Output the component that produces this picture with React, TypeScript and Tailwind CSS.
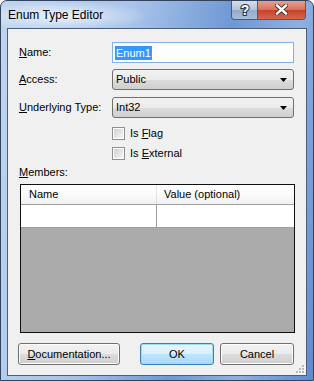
import React from 'react';

function Combo({ value }: { value: string }) {
  return (
    <div className="ml-auto flex h-[21px] w-[182px] items-center rounded-[3px] border border-[#707070] bg-[linear-gradient(#f2f2f2_0%,#ebebeb_50%,#dddddd_51%,#cfcfcf_100%)] pl-[3px] pr-[6px]">
      <span className="flex-1">{value}</span>
      <svg width="7" height="4" viewBox="0 0 7 4">
        <path d="M0 0h7L3.5 4z" fill="#000" />
      </svg>
    </div>
  );
}

function Check({ children }: { children: React.ReactNode }) {
  return (
    <div className="flex h-[13px] items-center pl-[93px]">
      <div className="flex h-[13px] w-[13px] items-center justify-center border border-[#8e8f8f] bg-white">
        <div className="h-[9px] w-[9px] bg-[linear-gradient(135deg,#cbcfd5,#f6f6f6)]" />
      </div>
      <span className="ml-[5px]">{children}</span>
    </div>
  );
}

function Btn({ children, w, focus }: { children: React.ReactNode; w: string; focus?: boolean }) {
  const base = 'flex h-[22px] items-center justify-center rounded-[3px] border ';
  const look = focus
    ? 'border-[#3c7fb1] bg-[linear-gradient(#eaf6fd_0%,#d9f0fc_50%,#bee6fd_51%,#a7d9f5_100%)] shadow-[inset_0_0_0_1px_#9fdcf8]'
    : 'border-[#707070] bg-[linear-gradient(#f2f2f2_0%,#ebebeb_50%,#dddddd_51%,#cfcfcf_100%)] shadow-[inset_0_0_0_1px_#fcfcfc]';
  return <div className={base + look + ' ' + w}>{children}</div>;
}

export default function App() {
  return (
    <div className="relative h-[381px] w-[314px] overflow-hidden rounded-t-[7px] border border-[#33435c] bg-[linear-gradient(100deg,#bfd5f0_0%,#a9c4ea_35%,#6f98d4_62%,#8db0e0_80%,#5f8bd0_100%)] font-['Liberation_Sans',Arial,sans-serif] text-[11px] text-black">
      {/* glass glow behind title */}
      <div className="pointer-events-none absolute left-0 top-0 h-[30px] w-[150px] bg-[radial-gradient(ellipse_at_40%_50%,rgba(255,255,255,0.75),rgba(255,255,255,0)_70%)]" />

      {/* title bar */}
      <div className="relative flex h-[27px] items-center pl-[7px] text-[12px]">Enum Type Editor</div>

      {/* caption buttons */}
      <div className="absolute right-[7px] top-[-1px] flex h-[20px] overflow-hidden rounded-b-[4px] border border-t-0 border-[#4a5a78]">
        <div className="flex w-[26px] items-center justify-center border-r border-[#4a5a78] bg-[linear-gradient(#d8e2ef_0%,#b5c6dd_50%,#93a9c8_51%,#a9bdd8_100%)]">
          <svg width="12" height="16" viewBox="0 0 12 16">
            <text
              x="6"
              y="13"
              textAnchor="middle"
              fontFamily="Liberation Sans, Arial, sans-serif"
              fontWeight="bold"
              fontSize="14"
              fill="#fff"
              stroke="#2a3650"
              strokeWidth="2.2"
              paintOrder="stroke"
            >
              ?
            </text>
          </svg>
        </div>
        <div className="flex w-[47px] items-center justify-center bg-[linear-gradient(#e8a493_0%,#d8735e_50%,#c5412c_51%,#d4664a_100%)]">
          <svg width="13" height="11" viewBox="0 0 13 11">
            <path d="M2 1.5l9 8M11 1.5l-9 8" stroke="#3a2a2a" strokeWidth="4" strokeLinecap="square" />
            <path d="M2 1.5l9 8M11 1.5l-9 8" stroke="#fff" strokeWidth="2.4" strokeLinecap="square" />
          </svg>
        </div>
      </div>

      {/* client area */}
      <div className="relative mx-[6px] h-[348px] border border-[#4d5e7c] bg-[#f0f0f0] pr-[12px] pl-[11px] pt-[13px]">
        <div className="flex h-[21px] items-center">
          <span><u className="underline-offset-1">N</u>ame:</span>
          <div className="ml-auto flex h-[21px] w-[182px] items-center border border-[#7eb4ea] bg-white px-[2px]">
            <span className="bg-[#3399ff] px-px leading-[14px] text-white">Enum1</span>
          </div>
        </div>
        <div className="mt-[6px] flex items-center">
          <span><u className="underline-offset-1">A</u>ccess:</span>
          <Combo value="Public" />
        </div>
        <div className="mt-[7px] flex items-center">
          <span><u className="underline-offset-1">U</u>nderlying Type:</span>
          <Combo value="Int32" />
        </div>
        <div className="mt-[9px]">
          <Check>Is <u className="underline-offset-1">F</u>lag</Check>
        </div>
        <div className="mt-[7px]">
          <Check>Is <u className="underline-offset-1">E</u>xternal</Check>
        </div>
        <div className="mt-[6px] leading-[13px]">
          <u className="underline-offset-1">M</u>embers:
        </div>

        {/* members grid */}
        <div className="ml-px mt-[5px] flex h-[149px] w-[275px] flex-col border border-[#101010] bg-[#ababab]">
          <div className="flex h-[20px] border-b border-[#a0a0a0] bg-[linear-gradient(#ffffff_0%,#fbfbfb_50%,#f0f1f2_100%)]">
            <div className="flex w-[136px] items-center border-r border-[#e2e3e5] pl-[8px]">Name</div>
            <div className="flex items-center pl-[7px]">Value (optional)</div>
          </div>
          <div className="flex h-[23px] border-b border-[#a0a0a0] bg-white">
            <div className="w-[136px] border-r border-[#a0a0a0]" />
            <div className="flex-1" />
          </div>
        </div>

        {/* buttons */}
        <div className="ml-[-1px] mt-[10px] flex">
          <Btn w="w-[105px]">
            <span><u className="underline-offset-1">D</u>ocumentation...</span>
          </Btn>
          <div className="ml-[20px]">
            <Btn w="w-[74px]" focus>OK</Btn>
          </div>
          <div className="ml-[6px]">
            <Btn w="w-[74px]">Cancel</Btn>
          </div>
        </div>

        {/* size grip */}
        <svg className="absolute bottom-[1px] right-[1px]" width="10" height="10" viewBox="0 0 10 10">
          {[
            [7, 1],
            [4, 4],
            [7, 4],
            [1, 7],
            [4, 7],
            [7, 7],
          ].map(([x, y], i) => (
            <g key={i}>
              <rect x={x + 1} y={y + 1} width="2" height="2" fill="#fff" />
              <rect x={x} y={y} width="2" height="2" fill="#b8b8b8" />
            </g>
          ))}
        </svg>
      </div>
    </div>
  );
}
